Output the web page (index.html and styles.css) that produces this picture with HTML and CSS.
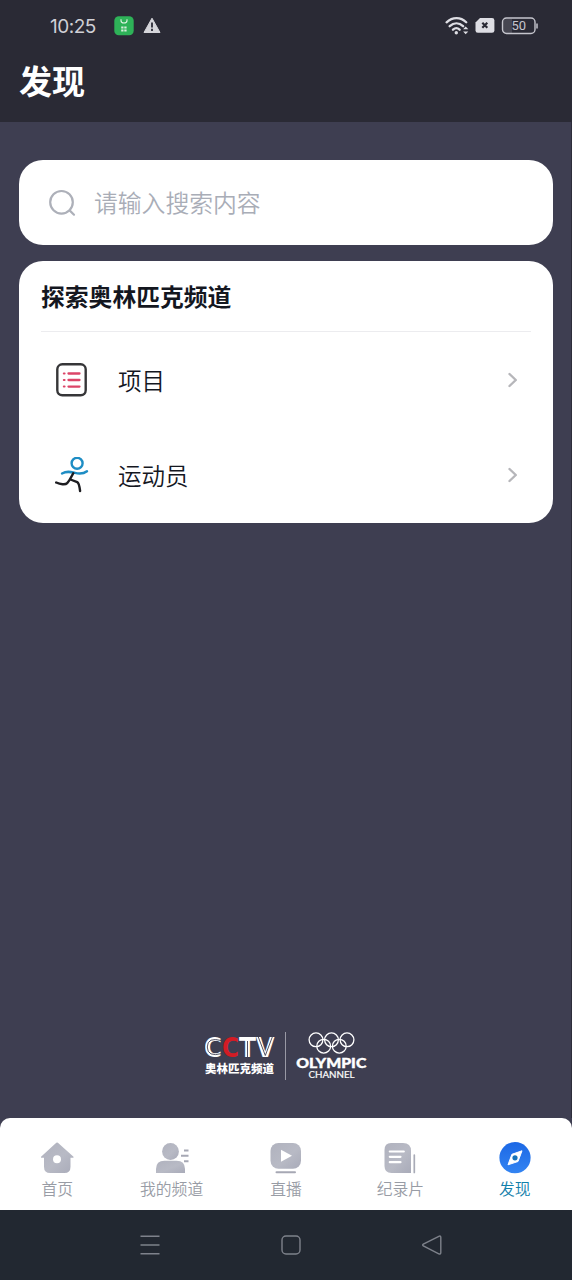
FILE: index.html
```html
<!DOCTYPE html>
<html lang="zh-CN">
<head>
<meta charset="utf-8">
<title>发现</title>
<link rel="stylesheet" href="styles.css">
</head>
<body>
<div class="app">
  <header class="header">
    <div class="status">
      <span class="time">10:25</span>
      <svg class="status-app" width="20" height="20" viewBox="0 0 20 20"><rect x=".3" y=".3" width="19.4" height="19" rx="4.5" fill="#2eb258"/><path d="M7 3.2v1.2a3 2.6 0 0 0 6 0V3.2" fill="none" stroke="#e1f3e4" stroke-width="1.1"/><path d="M7.200 11.500h5.400M7.200 14.500h5.400" stroke="#d5eeda" stroke-width="2.200" stroke-dasharray="2.3 .8"/></svg>
      <svg class="status-warn" width="18" height="17" viewBox="0 0 18 17"><path d="M9 1.2 17 15.5H1Z" fill="#d5d5da" stroke="#d5d5da" stroke-width="1" stroke-linejoin="round"/><path d="M9 5.5v5M9 11.8V14" stroke="#2a2a35" stroke-width="1.8"/></svg>
      <span class="spacer"></span>
      <svg width="24" height="20" viewBox="0 0 24 20" fill="none" stroke="#dedee4" stroke-width="2.300" stroke-linecap="round"><path d="M1.6 6.3C7.5.8 15.6.8 21.2 6.3M4.7 10.2c4.1-3.8 9.4-3.8 13.4 0M8 13.7c2.2-2 4.5-2 6.6 0"/><circle cx="11.3" cy="16.8" r="1.7" fill="#dedee4" stroke="none"/><path d="m18.1 13.2 2.6-2.7 2.6 2.7zM18.1 15.5l2.6 2.7 2.6-2.7z" fill="#dedee4" stroke="none"/></svg>
      <svg class="sim" width="20" height="17" viewBox="0 0 20 17"><path d="M5 1h12q2.4 0 2.4 2.4v10.2q0 2.2-2.4 2.2H2.8Q.5 15.800.5 13.600V5.500Z" fill="#dedee4"/><path d="m7.300 5.700 5 5m0-5-5 5" stroke="#2a2a35" stroke-width="2.200"/></svg>
      <svg class="battery" width="38" height="20" viewBox="0 0 38 20"><path d="M5 3h6v14H5q-3 0-3-3V6q0-3 3-3Z" fill="#464651"/><rect x="1.500" y="2" width="32.500" height="15.500" rx="4" fill="none" stroke="#c5c5cd" stroke-width="1.400"/><path d="M36 7.500v5" stroke="#c5c5cd" stroke-width="1.500"/><text class="battery-text" x="17.800" y="14.300">50</text></svg>
    </div>
    <h1 class="title">发现</h1>
  </header>

  <main class="main">
    <div class="search">
      <svg width="28" height="28" viewBox="0 0 28 28" fill="none" stroke="#adb0b9" stroke-width="2.200" stroke-linecap="round"><circle cx="13.500" cy="13.300" r="11.300"/><path d="m21.600 21.400 4.400 4.300"/></svg>
      <span class="search-hint">请输入搜索内容</span>
    </div>
    <section class="card">
      <h2 class="card-title">探索奥林匹克频道</h2>
      <div class="row">
        <svg class="row-icon" width="34" height="36" viewBox="0 0 34 36" fill="none"><rect x="2.300" y="2.300" width="28.400" height="31" rx="5" stroke="#363638" stroke-width="2.400"/><path d="M13.500 11.500h11M13.500 18h11M13.500 24.600h11" stroke="#dc4568" stroke-width="2.300" stroke-linecap="round"/><path d="M8.800 11.500h.8M8.800 18h.8M8.800 24.600h.8" stroke="#dc4568" stroke-width="2" stroke-linecap="round"/></svg>
        <span class="row-label">项目</span>
        <svg width="12" height="16" viewBox="0 0 12 16"><path d="m2.500 2 6.300 6-6.300 6" fill="none" stroke="#b6b6ba" stroke-width="2.400" stroke-linecap="round" stroke-linejoin="round"/></svg>
      </div>
      <div class="row">
        <svg class="row-icon" width="34" height="36" viewBox="0 0 34 36" fill="none" stroke-width="2.400" stroke-linecap="round"><circle cx="22.100" cy="6.300" r="5.500" stroke="#1e8dc4"/><path d="M7 16.500c5-2.800 8.500-1.700 13-.6 4.500 1.100 8.500 1 12-1.700" stroke="#1e8dc4"/><path d="M18.200 16.300c-2.300 4.100-3.500 7.300-6 9.800-1.800 1.900-7 1.200-11-.6M15.500 22.500l6.700 2.600c1.200.6 2.300 4 2.900 8.900" stroke="#1d1d21"/></svg>
        <span class="row-label">运动员</span>
        <svg width="12" height="16" viewBox="0 0 12 16"><path d="m2.500 2 6.300 6-6.300 6" fill="none" stroke="#b6b6ba" stroke-width="2.400" stroke-linecap="round" stroke-linejoin="round"/></svg>
      </div>
    </section>
    <div class="brand">
      <svg width="162" height="50" viewBox="0 0 162 50">
        <g class="cctv"><text x="-1" y="25.500" textLength="18" lengthAdjust="spacingAndGlyphs">C</text><text class="cctv-red" x="17" y="25.500" textLength="17" lengthAdjust="spacingAndGlyphs">C</text><text x="34" y="25.500" textLength="17" lengthAdjust="spacingAndGlyphs">T</text><text x="51" y="25.500" textLength="18.500" lengthAdjust="spacingAndGlyphs">V</text></g>
        <path d="M17 9.700Q2.300 5.500 2.300 16T17 22.500" fill="none" stroke="#3e3e51" stroke-width=".9"/>
        <path d="M42.500 10v16.500M53.300 6l7 18.500 7-18.500" fill="none" stroke="#3e3e51" stroke-width=".9"/>
        <text class="brand-cn" x="0" y="42" textLength="69" lengthAdjust="spacingAndGlyphs">奥林匹克频道</text>
        <path d="M80.500 1v48" stroke="#9999a5" stroke-width="1"/>
        <g fill="none" stroke="#fff" stroke-width="1.300"><circle cx="111" cy="8.800" r="6.900"/><circle cx="126.500" cy="8.800" r="6.900"/><circle cx="142" cy="8.800" r="6.900"/><circle cx="118.700" cy="15.200" r="6.900"/><circle cx="134.300" cy="15.200" r="6.900"/></g>
        <text class="olympic" x="91.300" y="37.300" textLength="70" lengthAdjust="spacingAndGlyphs">OLYMPIC</text>
        <text class="channel" x="103.500" y="47.200" textLength="46" lengthAdjust="spacingAndGlyphs">CHANNEL</text>
      </svg>
    </div>
  </main>

  <nav class="tabs">
    <svg class="defs" width="0" height="0"><defs><linearGradient id="gray" x2="1" y2="1"><stop stop-color="#b0b2be"/><stop offset=".55" stop-color="#b8bac5"/><stop offset="1" stop-color="#a9abb9"/></linearGradient><linearGradient id="blue" x2="0" y2="1"><stop stop-color="#1c68e5"/><stop offset="1" stop-color="#3384f2"/></linearGradient></defs></svg>
    <div class="tab"><svg width="36" height="34" viewBox="0 0 36 34"><path d="M18.900 1.700q-.8-.6-1.600 0L2 15.700q-.4.800.5 1H5v9q0 6.300 6.300 6.300h14q6.200 0 6.200-6.300v-9H34q1-.2.500-1Z" fill="url(#gray)"/><circle cx="18" cy="18.300" r="4" fill="#fff"/></svg><span>首页</span></div>
    <div class="tab"><svg width="36" height="34" viewBox="0 0 36 34"><circle cx="16.500" cy="10.500" r="8.400" fill="url(#gray)"/><path d="M2 32V28q0-8.300 8.500-8.300h12Q31 19.700 31 28v4Z" fill="url(#gray)"/><path d="M30 9.500h4.500M27 14.800h7.500M30 20.300h4.500" stroke="#a6a8b4" stroke-width="1.900"/></svg><span>我的频道</span></div>
    <div class="tab"><svg width="36" height="34" viewBox="0 0 36 34"><rect x="2.500" y="2" width="30.500" height="25.800" rx="8" fill="url(#gray)"/><path d="M13 8.800v12l11-6Z" fill="#fff"/><path d="M8.500 31.300h18.500" stroke="#a6a8b4" stroke-width="2" stroke-linecap="round"/></svg><span>直播</span></div>
    <div class="tab"><svg width="36" height="34" viewBox="0 0 36 34"><path d="M9 2h12q8 0 8 8v22H9.500q-7 0-7-7V9q0-7 6.500-7Z" fill="url(#gray)"/><path d="M7.800 10.500h14M7.800 15.800h10.700M7.800 21.200h10.700" stroke="#fff" stroke-width="2.200" stroke-linecap="round"/><path d="M32.300 14v17.500" stroke="#a9abb7" stroke-width="1.700" stroke-linecap="round"/></svg><span>纪录片</span></div>
    <div class="tab tab-active"><svg width="36" height="34" viewBox="0 0 36 34"><circle cx="18" cy="16.700" r="15.600" fill="url(#blue)"/><path d="m25 9.800-4 10.700-10 3.300 3.900-10.500Z" fill="#fff" stroke="#fff" stroke-linejoin="round"/><circle cx="18" cy="16.800" r="2.600" fill="#1672b9"/></svg><span>发现</span></div>
  </nav>

  <footer class="system-nav">
    <svg width="22" height="22" viewBox="0 0 22 22"><path d="M1.500 2.300h19M1.500 11h19M1.500 19.700h19"/></svg>
    <svg width="22" height="22" viewBox="0 0 22 22"><rect x="2" y="2" width="18" height="18" rx="4"/></svg>
    <svg width="22" height="22" viewBox="0 0 22 22"><path d="M2.300 10.200 17.800 2.300q2-.8 2 1v15.500q0 1.800-2 1L2.300 12q-1.300-.9 0-1.800Z"/></svg>
  </footer>
</div>
</body>
</html>
```
FILE: styles.css
```css
* { box-sizing: border-box; }
body {
  margin: 0;
  background: #3e3e51;
  font-family: "Noto Sans CJK SC", sans-serif;
}
svg { display: block; flex: none; }
.app { width: 572px; height: 1280px; display: flex; flex-direction: column; overflow: hidden; }

.header { height: 122px; background: #2a2a35; flex: none; }
.status { height: 51px; display: flex; align-items: center; padding: 0 33px 0 50px; }
.time { width: 64px; color: #d0d0d6; font: 400 19px/24px Inter, sans-serif; letter-spacing: -.5px; padding-top: 2px; }
.status-warn { margin-left: 9px; }
.spacer { flex: 1; }
.sim { margin-left: 6px; }
.battery { margin-left: 6px; }
.battery-text { font: 13px Roboto, sans-serif; fill: #c5c5cd; text-anchor: middle; }
.title { margin: 4px 0 0 19px; color: #fff; font-size: 33px; line-height: 50px; font-weight: 700; }

.main {
  flex: 1;
  display: flex;
  flex-direction: column;
  padding: 38px 18px 37px 19px;
  border-right: 1px solid #2d2d3a;
}
.search {
  height: 85px;
  flex: none;
  display: flex;
  align-items: center;
  gap: 18px;
  padding-left: 29px;
  border-radius: 24px;
  background: #fff;
  color: #a9adb7;
  font-size: 23.800px;
  font-weight: 350;
}
.search-hint { padding-bottom: 2px; }
.card {
  height: 262px;
  flex: none;
  margin-top: 15.500px;
  padding: 0 22px;
  border-radius: 24px;
  background: #fff;
  color: #14171f;
}
.card-title {
  margin: 0;
  height: 71px;
  border-bottom: 1px solid #ececef;
  font-size: 23.800px;
  line-height: 70px;
  font-weight: 700;
}
.row { height: 95px; display: flex; align-items: center; padding: 1px 12px 0 14px; }
.row-icon { margin-right: 29px; }
.row-label { flex: 1; font-size: 23.500px; line-height: 34px; font-weight: 350; }

.brand { margin-top: auto; padding-left: 186px; }
.cctv { font: 700 26px "DejaVu Sans", sans-serif; fill: #fff; }
.cctv-red { fill: #d31c25; }
.brand-cn { font: 900 11.500px "Noto Sans CJK SC", sans-serif; fill: #fff; }
.olympic { font: 900 14px Lato, sans-serif; fill: #fff; stroke: #fff; stroke-width: .4px; }
.channel { font: 400 9.500px Lato, sans-serif; fill: #fff; stroke: #fff; stroke-width: .2px; }

.tabs {
  height: 92px;
  flex: none;
  display: grid;
  grid-template-columns: repeat(5, 1fr);
  border-radius: 10px 10px 0 0;
  background: #fff;
}
.defs { position: absolute; }
.tab {
  display: flex;
  flex-direction: column;
  align-items: center;
  padding-top: 23px;
  color: #989ca5;
  font-size: 15.800px;
  line-height: 27px;
  font-weight: 350;
}
.tab-active { color: #1280ab; }

.system-nav {
  height: 70px;
  flex: none;
  display: flex;
  justify-content: space-between;
  align-items: center;
  padding: 0 129px 0 139px;
  background: #222831;
  fill: none;
  stroke: #7e828b;
  stroke-width: 1.400px;
}
```
